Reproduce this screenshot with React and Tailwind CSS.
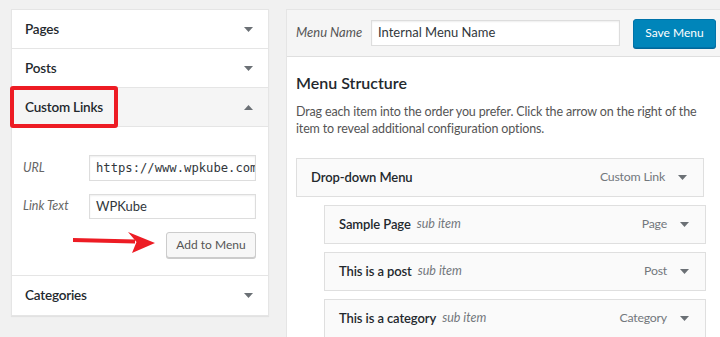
import React from "react";

const Down = () => (
  <svg width="9" height="5" viewBox="0 0 9 5" className="flex-none">
    <polygon points="0,0 9,0 4.5,5" fill="#6b7075" />
  </svg>
);
const Up = () => (
  <svg width="9" height="5" viewBox="0 0 9 5" className="flex-none">
    <polygon points="0,5 9,5 4.5,0" fill="#6b7075" />
  </svg>
);

function SideHeader({ title, open, last }) {
  return (
    <div
      className={
        "h-[39px] flex items-center justify-between pl-[13px] pr-[15px] " +
        (last ? "" : "border-b border-[#e5e5e5] ") +
        (open ? "bg-[#f5f5f5]" : "bg-white")
      }
    >
      <span className="text-[13.5px] tracking-[-0.2px] font-semibold text-[#23282d]">{title}</span>
      {open ? <Up /> : <Down />}
    </div>
  );
}

function Item({ title, sub, type, indent }) {
  return (
    <div
      className={
        "h-[39px] flex items-center justify-between bg-[#fafafa] border border-[#dfdfdf] pl-[14px] pr-[16px] " +
        (indent ? "ml-[28px] w-[382px] mt-[8px]" : "w-[408px]")
      }
    >
      <div className="flex items-center gap-[6px]">
        <span className="text-[13px] tracking-[-0.1px] font-semibold text-[#23282d]">{title}</span>
        {sub && <span className="text-[12.5px] italic text-[#72777c]">sub item</span>}
      </div>
      <div className="flex items-center gap-[13px]">
        <span className="text-[12.3px] tracking-[-0.2px] text-[#72777c]">{type}</span>
        <Down />
      </div>
    </div>
  );
}

export default function App() {
  return (
    <div
      className="w-[720px] h-[337px] bg-[#f1f1f1] overflow-hidden flex items-start pt-[9px] pl-[11px]"
      style={{ fontFamily: 'Lato, "Open Sans", sans-serif' }}
    >
      <div className="relative w-[258px] flex-none bg-white border border-[#e5e5e5] shadow-[0_1px_1px_rgba(0,0,0,0.06)]">
        <SideHeader title="Pages" />
        <SideHeader title="Posts" />
        <SideHeader title="Custom Links" open />
        <div className="border-b border-[#e5e5e5] pt-[28px] pb-[17px] pl-[11px] pr-[12px]">
          <div className="flex items-center">
            <span className="w-[66px] text-[12.5px] italic text-[#666]">URL</span>
            <div
              className="w-[167px] h-[26px] border border-[#ddd] flex items-center pl-[6px] overflow-hidden whitespace-nowrap text-[#32373c] shadow-[inset_0_1px_2px_rgba(0,0,0,0.07)]"
              style={{ fontFamily: '"DejaVu Sans Mono", "Liberation Mono", monospace', fontSize: "12.2px" }}
            >
              https://www.wpkube.com
            </div>
          </div>
          <div className="flex items-center mt-[13px]">
            <span className="w-[66px] text-[12.5px] italic text-[#666]">Link Text</span>
            <div className="w-[167px] h-[25px] border border-[#ddd] flex items-center pl-[6px] text-[13px] text-[#32373c] shadow-[inset_0_1px_2px_rgba(0,0,0,0.07)]">
              WPKube
            </div>
          </div>
          <div className="flex justify-end mt-[13px]">
            <div className="h-[26px] w-[90px] flex items-center justify-center bg-[#f7f7f7] border border-[#ccc] rounded-[3px] shadow-[0_1px_0_#ccc] text-[12px] text-[#555]">
              Add to Menu
            </div>
          </div>
        </div>
        <SideHeader title="Categories" last />

        <div className="absolute left-[-2px] top-[76px] w-[108px] h-[42px] border-[4px] border-[#ed1c24] rounded-[3px]" />
        <svg className="absolute left-[61px] top-[222px]" width="84" height="24" viewBox="0 0 84 24">
          <path d="M0 6 L62 7.5 L62 11.5 L0 10 Z" fill="#ed1c24" />
          <path d="M55 0 L82 11 L59 21 L63.5 10 Z" fill="#ed1c24" />
        </svg>
      </div>

      <div className="ml-[17px] w-[450px] flex-none bg-white border border-[#e5e5e5] h-[400px]">
        <div className="h-[47px] bg-[#f5f5f5] border-b border-[#dfdfdf] flex items-center pl-[9px]">
          <span className="text-[13px] italic text-[#555] w-[75px]">Menu Name</span>
          <div className="w-[249px] h-[26px] bg-white border border-[#ddd] flex items-center pl-[6px] text-[13px] text-[#32373c] shadow-[inset_0_1px_2px_rgba(0,0,0,0.07)]">
            Internal Menu Name
          </div>
          <div className="ml-[13px] h-[29px] w-[83px] flex items-center justify-center bg-[#0085ba] border border-[#0073aa] rounded-[3px] shadow-[0_1px_0_#006799] text-[12px] text-white">
            Save Menu
          </div>
        </div>
        <div className="pl-[9px] pt-[15px]">
          <div className="text-[16px] leading-[22px] font-semibold text-[#23282d]">Menu Structure</div>
          <p className="mt-[9px] w-[405px] text-[12.5px] tracking-[-0.15px] leading-[17px] text-[#555]">
            Drag each item into the order you prefer. Click the arrow on the right of the item to reveal additional configuration options.
          </p>
          <div className="mt-[21px]">
            <Item title="Drop-down Menu" type="Custom Link" />
            <Item title="Sample Page" sub type="Page" indent />
            <Item title="This is a post" sub type="Post" indent />
            <Item title="This is a category" sub type="Category" indent />
          </div>
        </div>
      </div>
    </div>
  );
}
